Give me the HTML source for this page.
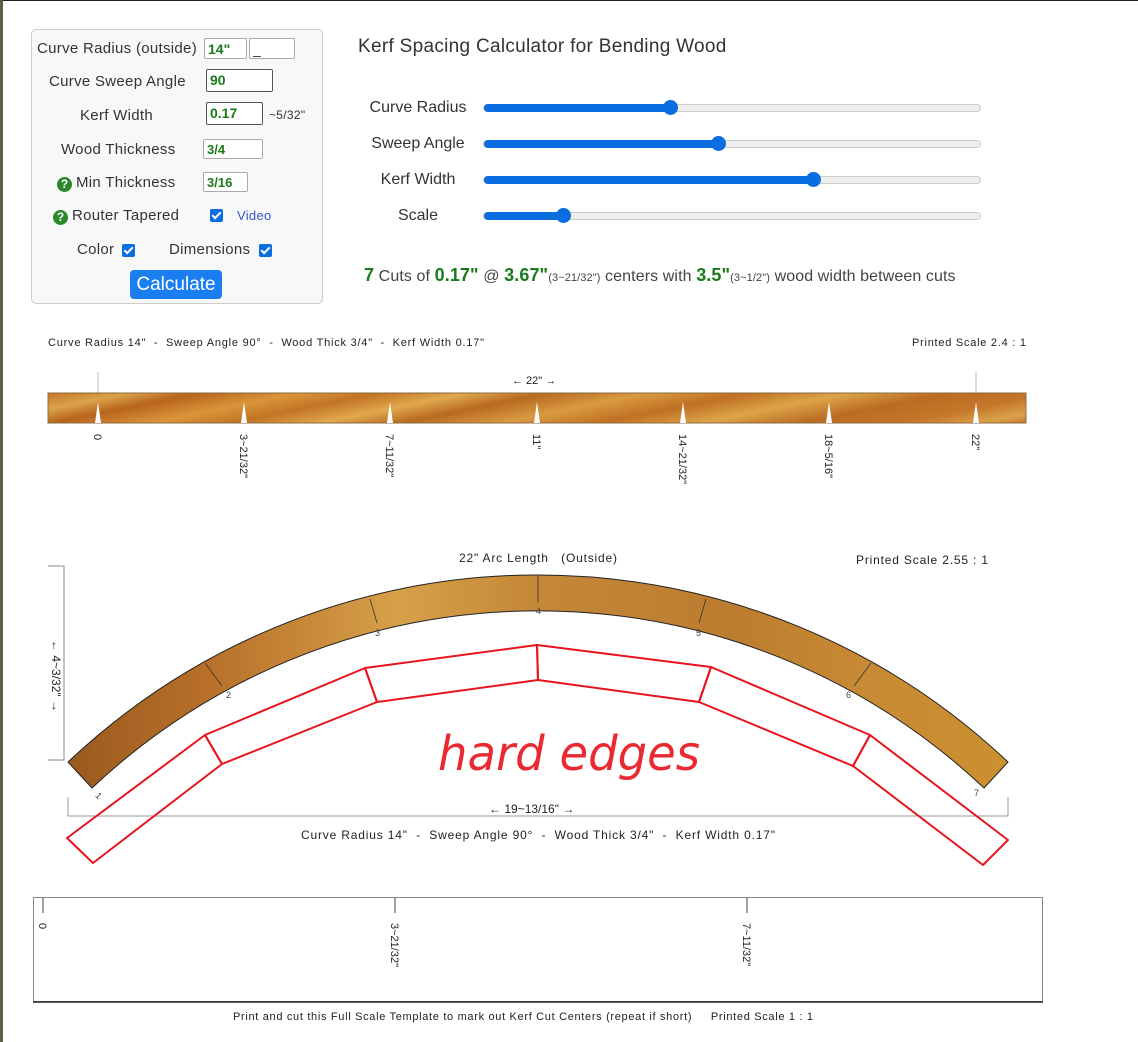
<!DOCTYPE html>
<html><head><meta charset="utf-8"><style>
body{margin:0;width:1138px;height:1042px;background:#fff;position:relative;overflow:hidden;font-family:"Liberation Sans",Arial,sans-serif;color:#333}
.edge{position:absolute;left:0;top:0;width:3px;height:1042px;background:#5a6048}
.topline{position:absolute;left:0;top:0;width:1138px;height:1px;background:#222}
.panel{position:absolute;left:31px;top:29px;width:290px;height:273px;border:1px solid #ccc;border-radius:5px;background:#f8f8f8}
.l{position:absolute;font-size:15px;color:#333;white-space:nowrap;letter-spacing:0.3px}
.in{position:absolute;border:1px solid #aaa;border-radius:2px;background:#fff;color:#1a7a1a;font-weight:bold;font-size:14px;padding-left:3px;box-sizing:border-box;line-height:20px}
.q{display:inline-block;width:15px;height:15px;border-radius:50%;background:#2a8a2a;color:#fff;font-size:12px;font-weight:bold;text-align:center;line-height:15px;vertical-align:-1px;margin-right:4px;letter-spacing:0}
.cb{position:absolute;width:13px;height:13px;background:#0a6de0;border-radius:2px}
.cb:after{content:"";position:absolute;left:4px;top:1px;width:3px;height:7px;border:solid #fff;border-width:0 2px 2px 0;transform:rotate(45deg)}
.btn{position:absolute;left:130px;top:270px;width:92px;height:29px;background:#1a7ef0;border-radius:4px;color:#fff;font-size:19px;text-align:center;line-height:29px}
.sl{position:absolute;left:483px;width:498px;height:8px;border-radius:4px;background:#eee;border:1px solid #ccc;box-sizing:border-box}
.sl b{position:absolute;left:0;top:-1px;height:8px;border-radius:4px;background:#0a6de0}
.sl i{position:absolute;top:-5px;width:15px;height:15px;border-radius:50%;background:#0a6de0}
.sll{position:absolute;font-size:16px;color:#333;text-align:center;width:110px;left:363px}
.g{color:#1a7a1a;font-weight:bold;font-size:18px}
.s{font-size:11px}
svg text{white-space:pre}
</style></head><body>
<div class="topline"></div><div class="edge"></div>
<div class="panel"></div>
<div class="l" style="left:37px;top:40px">Curve Radius (outside)</div>
<div class="in" style="left:204px;top:38px;width:43px;height:21px">14"</div>
<div class="in" style="left:249px;top:38px;width:46px;height:21px;color:#333;font-weight:normal">_</div>
<div class="l" style="left:49px;top:73px">Curve Sweep Angle</div>
<div class="in" style="left:206px;top:69px;width:67px;height:23px;border-color:#555">90</div>
<div class="l" style="left:80px;top:107px">Kerf Width</div>
<div class="in" style="left:206px;top:102px;width:57px;height:23px;border-color:#555">0.17</div>
<div class="l" style="left:269px;top:108px;font-size:12px">~5/32"</div>
<div class="l" style="left:61px;top:141px">Wood Thickness</div>
<div class="in" style="left:203px;top:139px;width:60px;height:20px;font-size:13px">3/4</div>
<div class="l" style="left:57px;top:174px"><span class="q">?</span>Min Thickness</div>
<div class="in" style="left:203px;top:172px;width:45px;height:20px;font-size:13px">3/16</div>
<div class="l" style="left:53px;top:207px"><span class="q">?</span>Router Tapered</div>
<div class="cb" style="left:210px;top:209px"></div>
<div class="l" style="left:237px;top:208px;font-size:13px;color:#3355cc">Video</div>
<div class="l" style="left:77px;top:241px">Color</div>
<div class="cb" style="left:122px;top:244px"></div>
<div class="l" style="left:169px;top:241px">Dimensions</div>
<div class="cb" style="left:259px;top:244px"></div>
<div class="btn">Calculate</div>

<div class="l" style="left:358px;top:36px;font-size:19px;color:#333">Kerf Spacing Calculator for Bending Wood</div>
<div class="sll" style="top:99px">Curve Radius</div>
<div class="sl" style="top:104px"><b style="width:186px"></b><i style="left:179px"></i></div>
<div class="sll" style="top:135px">Sweep Angle</div>
<div class="sl" style="top:140px"><b style="width:234px"></b><i style="left:227px"></i></div>
<div class="sll" style="top:171px">Kerf Width</div>
<div class="sl" style="top:176px"><b style="width:329px"></b><i style="left:322px"></i></div>
<div class="sll" style="top:207px">Scale</div>
<div class="sl" style="top:212px"><b style="width:79px"></b><i style="left:72px"></i></div>
<div class="l" style="left:364px;top:265px;font-size:16px;color:#444;letter-spacing:0.1px;word-spacing:0px"><span class="g">7</span> Cuts of <span class="g">0.17"</span> @ <span class="g">3.67"</span><span class="s">(3~21/32")</span> centers with <span class="g">3.5"</span><span class="s">(3~1/2")</span> wood width between cuts</div>

<svg width="1138" height="1042" style="position:absolute;left:0;top:0" font-family="Liberation Sans, sans-serif">
<defs>
<linearGradient id="w" x1="0" y1="0" x2="1" y2="0.15" spreadMethod="repeat">
<stop offset="0" stop-color="#c47628"/><stop offset="0.08" stop-color="#dba24a"/><stop offset="0.15" stop-color="#b8641c"/><stop offset="0.25" stop-color="#d9953a"/><stop offset="0.33" stop-color="#c27424"/><stop offset="0.42" stop-color="#e0a84e"/><stop offset="0.5" stop-color="#b86a20"/><stop offset="0.6" stop-color="#d89a40"/><stop offset="0.7" stop-color="#c07022"/><stop offset="0.8" stop-color="#dca448"/><stop offset="0.9" stop-color="#bb6c22"/><stop offset="1" stop-color="#c47628"/>
</linearGradient>
<linearGradient id="w2" x1="0" y1="0" x2="1" y2="0">
<stop offset="0" stop-color="#9a5a1e"/><stop offset="0.15" stop-color="#b8702a"/><stop offset="0.35" stop-color="#d6a048"/><stop offset="0.5" stop-color="#c48838"/><stop offset="0.7" stop-color="#bc7c30"/><stop offset="0.85" stop-color="#c88a34"/><stop offset="1" stop-color="#cc9030"/>
</linearGradient>
</defs>
<g font-size="11" fill="#222">
<text x="48" y="346" textLength="436">Curve Radius 14"  -  Sweep Angle 90°  -  Wood Thick 3/4"  -  Kerf Width 0.17"</text>
<text x="912" y="346" textLength="114">Printed Scale 2.4 : 1</text>
<text x="512" y="384">← 22" →</text>
</g>
<line x1="98" y1="372" x2="98" y2="393" stroke="#bbb"/>
<line x1="976" y1="372" x2="976" y2="393" stroke="#bbb"/>
<rect x="48" y="393" width="978" height="30" fill="url(#w)" stroke="#8a6a40" stroke-width="1"/>
<g fill="#fff">
<polygon points="95,423 98,402 101,423"/><polygon points="241,423 244,402 247,423"/><polygon points="387,423 390,402 393,423"/><polygon points="534,423 537,402 540,423"/><polygon points="680,423 683,402 686,423"/><polygon points="826,423 829,402 832,423"/><polygon points="973,423 976,402 979,423"/>
</g>
<g font-size="11" fill="#222">
<text transform="translate(94,434) rotate(90)">0</text>
<text transform="translate(240,434) rotate(90)">3~21/32"</text>
<text transform="translate(386,434) rotate(90)">7~11/32"</text>
<text transform="translate(533,434) rotate(90)">11"</text>
<text transform="translate(679,434) rotate(90)">14~21/32"</text>
<text transform="translate(825,434) rotate(90)">18~5/16"</text>
<text transform="translate(972,434) rotate(90)">22"</text>
</g>
<g font-size="12" fill="#222">
<text x="459" y="562" textLength="158">22" Arc Length   (Outside)</text>
<text x="856" y="564" textLength="132">Printed Scale 2.55 : 1</text>
</g>
<path d="M48,566 H64 V760 H48" fill="none" stroke="#888"/>
<text transform="translate(52,640) rotate(90)" font-size="12" fill="#222">← 4~3/32" →</text>
<path d="M68,762 A684,684 0 0 1 1008,762 L984,788 A650,650 0 0 0 92,788 Z" fill="url(#w2)" stroke="#222" stroke-width="1"/>
<g stroke="#333" stroke-width="0.8">
<line x1="205" y1="663" x2="222" y2="686"/><line x1="370" y1="599" x2="377" y2="623"/><line x1="538" y1="576" x2="538" y2="602"/><line x1="706" y1="599" x2="699" y2="623"/><line x1="871" y1="663" x2="854" y2="686"/>
</g>
<g font-size="9" fill="#444">
<text x="96" y="799" transform="rotate(45 99 796)">1</text><text x="226" y="698">2</text><text x="375" y="636">3</text><text x="536" y="614">4</text><text x="696" y="636">5</text><text x="846" y="698">6</text><text x="974" y="796">7</text>
</g>
<path d="M68,797 V816 H1008 V797" fill="none" stroke="#999"/>
<text x="489" y="813" font-size="12" fill="#222">← 19~13/16" →</text>
<text x="301" y="839" font-size="12" fill="#222" textLength="474">Curve Radius 14"  -  Sweep Angle 90°  -  Wood Thick 3/4"  -  Kerf Width 0.17"</text>
<g fill="none" stroke="#e8141c" stroke-width="2" stroke-linejoin="round">
<polygon points="67,838 205,735 222,764 93,863"/>
<polygon points="205,735 365,668 377,702 222,764"/>
<polygon points="365,668 537,645 538,680 377,702"/>
<polygon points="537,645 711,667 699,702 538,680"/>
<polygon points="711,667 870,735 853,766 699,702"/>
<polygon points="870,735 1008,840 983,865 853,766"/>
</g>
<text x="438" y="770" font-size="48" fill="#e8141c" font-family="DejaVu Sans, sans-serif" font-weight="normal" textLength="262" lengthAdjust="spacingAndGlyphs" font-style="italic" opacity="0.9">hard edges</text>
<rect x="33.5" y="897.5" width="1009" height="104" fill="none" stroke="#888"/>
<line x1="33" y1="1002" x2="1043" y2="1002" stroke="#222" stroke-width="1.5"/>
<g stroke="#444"><line x1="43" y1="898" x2="43" y2="913"/><line x1="395" y1="898" x2="395" y2="913"/><line x1="747" y1="898" x2="747" y2="913"/></g>
<g font-size="11" fill="#222">
<text transform="translate(39,923) rotate(90)">0</text>
<text transform="translate(391,923) rotate(90)">3~21/32"</text>
<text transform="translate(743,923) rotate(90)">7~11/32"</text>
<text x="233" y="1020" textLength="580">Print and cut this Full Scale Template to mark out Kerf Cut Centers (repeat if short)     Printed Scale 1 : 1</text>
</g>
</svg>
</body></html>
